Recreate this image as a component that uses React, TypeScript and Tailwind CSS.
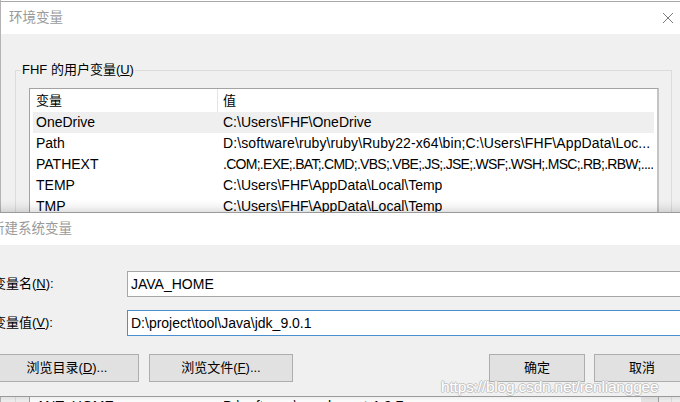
import React from "react";

const F = "font-['Liberation_Sans','Noto_Sans_CJK_SC',sans-serif]";

function CloseIcon() {
  return (
    <svg width="12" height="12" viewBox="0 0 12 12" className="block">
      <path d="M1 1 L11 11 M11 1 L1 11" stroke="#7a7a7a" strokeWidth="1" fill="none" />
    </svg>
  );
}

const userRows: [string, string, string][] = [
  ["OneDrive", "C:\\Users\\FHF\\OneDrive", ""],
  ["Path", "D:\\software\\ruby\\ruby\\Ruby22-x64\\bin;C:\\Users\\FHF\\AppData\\Loc...", "tracking-[0.1px]"],
  ["PATHEXT", ".COM;.EXE;.BAT;.CMD;.VBS;.VBE;.JS;.JSE;.WSF;.WSH;.MSC;.RB;.RBW;....", "tracking-[-0.72px]"],
  ["TEMP", "C:\\Users\\FHF\\AppData\\Local\\Temp", ""],
  ["TMP", "C:\\Users\\FHF\\AppData\\Local\\Temp", ""],
];

function ListRow({ name, value, selected, vc = "" }: { name: string; value: string; selected?: boolean; vc?: string }) {
  return (
    <div className={`mx-[3px] flex h-[21px] items-center text-[14px] text-black ${selected ? "bg-[#efefef]" : ""}`}>
      <div className="w-[190px] shrink-0 pl-[3px] whitespace-nowrap">{name}</div>
      <div className={`whitespace-nowrap overflow-hidden ${vc}`}>{value}</div>
    </div>
  );
}

function ListHeader() {
  return (
    <div className="flex h-[23px] items-center text-[13px] text-black">
      <div className="w-[188px] shrink-0 pl-[6px] h-full flex items-center border-r border-[#e5e5e5]">变量</div>
      <div className="pl-[5px]">值</div>
    </div>
  );
}

function BackgroundWindow() {
  return (
    <div className="absolute inset-0 bg-[#f0f0f0] border-l border-[#b4b4b4]">
      <div className="h-px bg-white" />
      <div className="h-px bg-[#a8a8a8]" />
      <div className="flex h-[32px] items-center justify-between bg-white pl-[8px] pr-[6px]">
        <span className="text-[13.5px] text-[#9a9a9a]">环境变量</span>
        <CloseIcon />
      </div>
      <fieldset className="ml-[14px] mr-[8px] mt-[27px] border border-[#dcdcdc] pb-[40px]">
        <legend className="ml-[5px] px-px text-[13px] leading-[18px] text-black">
          FHF 的用户变量(<span className="underline">U</span>)
        </legend>
        <div className="ml-[13px] mr-[12px] mt-[9px] h-[208px] border border-[#a3a3a3] border-r-2 border-r-[#c4c4c4] bg-white">
          <ListHeader />
          {userRows.map(([n, v, c], i) => (
            <ListRow key={n} name={n} value={v} vc={c} selected={i === 0} />
          ))}
        </div>
      </fieldset>
      <fieldset className="ml-[14px] mr-[8px] mt-[8px] border border-[#dcdcdc] pb-[20px]">
        <legend className="ml-[5px] px-px text-[13px] leading-[18px] text-black">
          系统变量(<span className="underline">S</span>)
        </legend>
        <div className="ml-[13px] mr-[12px] mt-[9px] h-[120px] border border-[#a3a3a3] bg-white flex">
          <div className="flex-1">
            <ListHeader />
            <ListRow name="ANT_HOME" value="D:\software\apache-ant-1.9.7" />
          </div>
          <div className="w-[17px] bg-[#e8e8e8]" />
        </div>
      </fieldset>
    </div>
  );
}

function Button({ children, w }: { children: React.ReactNode; w: string }) {
  return (
    <div className={`${w} h-[28px] shrink-0 flex items-center justify-center border border-[#adadad] bg-[#e1e1e1] text-[13px] text-black`}>
      {children}
    </div>
  );
}

function EditDialog() {
  return (
    <div className="absolute left-[-19px] top-[212px] w-[740px] h-[185px] border border-[#9a9a9a] bg-[#f0f0f0] shadow-[0_-2px_10px_rgba(0,0,0,0.18)]">
      <div className="flex h-[32px] items-center bg-white pl-[9px]">
        <span className="text-[13.5px] text-[#9a9a9a]">新建系统变量</span>
      </div>
      <div className="mt-[26px] flex items-center pl-[11px]">
        <div className="w-[134px] shrink-0 text-[13px] text-black">
          变量名(<span className="underline">N</span>):
        </div>
        <div className="h-[26px] w-[580px] border border-[#a6a6a6] bg-white flex items-center pl-[3px] text-[14px] text-black">
          JAVA_HOME
        </div>
      </div>
      <div className="mt-[13px] flex items-center pl-[11px]">
        <div className="w-[134px] shrink-0 text-[13px] text-black">
          变量值(<span className="underline">V</span>):
        </div>
        <div className="h-[26px] w-[580px] border border-[#4a8fcf] bg-white flex items-center pl-[3px] text-[14px] text-black">
          D:\project\tool\Java\jdk_9.0.1
        </div>
      </div>
      <div className="mt-[18px] flex pl-[13px]">
        <Button w="w-[144px]">
          浏览目录(<span className="underline">D</span>)...
        </Button>
        <div className="ml-[10px]">
          <Button w="w-[144px]">
            浏览文件(<span className="underline">F</span>)...
          </Button>
        </div>
        <div className="ml-[196px]">
          <Button w="w-[96px]">确定</Button>
        </div>
        <div className="ml-[9px]">
          <Button w="w-[96px]">取消</Button>
        </div>
      </div>
    </div>
  );
}

export default function App() {
  return (
    <div className={`relative h-[402px] w-[680px] overflow-hidden bg-white ${F}`}>
      <BackgroundWindow />
      <EditDialog />
      <div className="absolute left-[441px] top-[375px] text-[15.5px] tracking-[-0.2px] text-white [text-shadow:1px_0_0_#c4c4c4,-1px_0_0_#c4c4c4,0_1px_0_#c4c4c4,0_-1px_0_#c4c4c4]">
        https://blog.csdn.net/renlianggee
      </div>
    </div>
  );
}
